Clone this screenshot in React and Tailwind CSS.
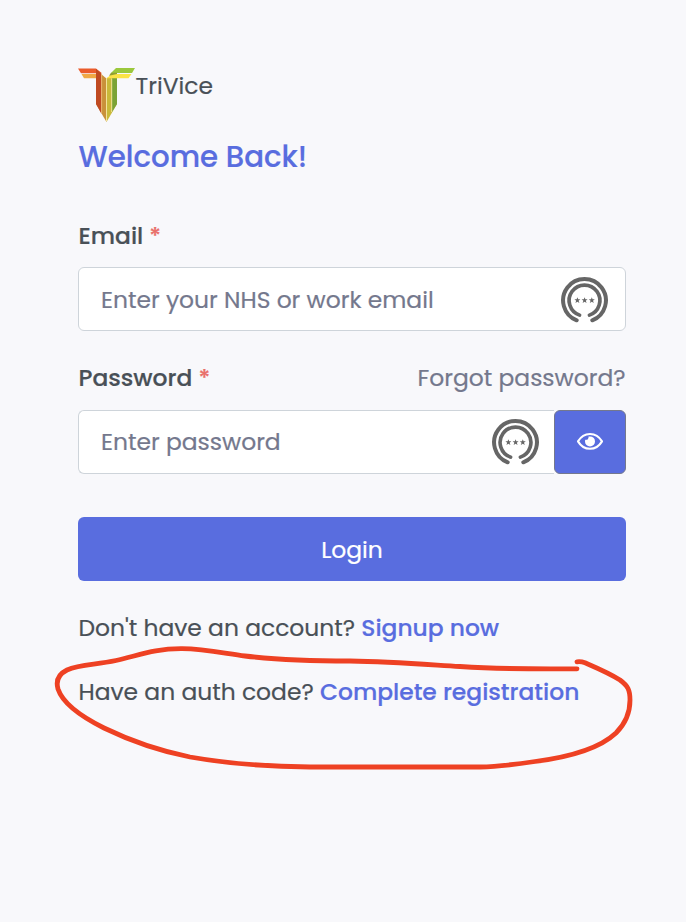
function Logo() {
  return (
    <svg className="block h-[55px] w-[57px] shrink-0" viewBox="0 0 57 55">
      <polygon points="0,0.5 18,0.5 24,5.2 3,5.2" fill="#ea5b2b" />
      <polygon points="3.5,6 19,6 19,10.3 6,10.3" fill="#f0a844" />
      <polygon points="38,0 57,0 54,5 33,5" fill="#9bc83c" />
      <polygon points="18,2 28.5,10.5 28.5,54 18,36" fill="#c9913a" />
      <polygon points="18,1 23.3,5.5 23.3,45.5 18,36" fill="#c04a22" />
      <polygon points="28.5,10.5 39,5 39,36 28.5,54" fill="#c9b93a" />
      <polygon points="34,9 39,7 39,36 34,44" fill="#7ba336" />
      <polygon points="34,6 53.5,6 50.5,10.3 28.5,10.3" fill="#fbe345" />
      <polygon points="33,4.8 39,4.8 39,6 31,7.8" fill="#8f9f32" />
      <path d="M28.5 10V53M33.7 10.5V44" stroke="#f6e7a0" strokeWidth="0.9" />
      <path d="M23.6 6V45" stroke="#eebb78" strokeWidth="0.9" />
    </svg>
  );
}

const starPoints = "0,-3.2 0.8,-1.1 3,-1.1 1.2,0.4 2,2.7 0,1.3 -2,2.7 -1.2,0.4 -3,-1.1 -0.8,-1.1";

function KeeperIcon() {
  return (
    <svg className="block size-12 shrink-0" viewBox="0 0 48 48" fill="none" stroke="#666" strokeLinecap="round">
      <path d="M16.7 44.3A21.4 21.4 0 1 1 32.3 44.3" strokeWidth="4" />
      <path d="M19.6 39.1A15.4 15.4 0 1 1 29.4 39.1" strokeWidth="3.6" />
      <g fill="#666" stroke="none">
        <polygon points={starPoints} transform="translate(17.4 24.4)" />
        <polygon points={starPoints} transform="translate(24.6 24.4)" />
        <polygon points={starPoints} transform="translate(31.8 24.4)" />
      </g>
    </svg>
  );
}

function EyeIcon() {
  return (
    <svg className="block h-[20px] w-[28px]" viewBox="0 0 28 20" fill="none">
      <path d="M2 9.4C5 4.3 9 2 14 2S23 4.3 26 9.4C23 14.5 19 16.8 14 16.8S5 14.5 2 9.4Z" stroke="white" strokeWidth="2.1" strokeLinejoin="round" />
      <path d="M14 4.4A5 5 0 1 1 9 9.4C9 8.7 9.1 8.2 9.3 7.7A2.5 2.5 0 0 0 12.5 4.6C13 4.4 13.5 4.4 14 4.4Z" fill="white" />
    </svg>
  );
}

export default function App() {
  return (
    <main className="relative h-[922px] w-[686px] overflow-hidden whitespace-nowrap bg-[#f8f8fb] pl-[78px] pr-[60px] pt-[68px] font-['Poppins','Inter',sans-serif] text-[23.4px] leading-9 text-[#495057] [-webkit-text-stroke:0.2px]">
      <header className="flex h-[54px] items-start">
        <Logo />
        <span className="pl-[0.5px]">TriVice</span>
      </header>
      <h1 className="mt-[15px] pl-[0.5px] text-[29.25px] font-medium leading-10 text-[#596ddf]">Welcome Back!</h1>

      <label className="mt-[41px] block pl-[0.5px] font-medium">
        Email <span className="text-[#e96f6a]">*</span>
      </label>
      <div className="mt-[13px] flex h-16 items-center justify-between rounded-md border border-[#ced4da] bg-white pl-[22px] pr-[17px] pt-[2px] text-[#74788d]">
        <span>Enter your NHS or work email</span>
        <KeeperIcon />
      </div>

      <div className="mt-[29px] flex justify-between">
        <label className="pl-[0.5px] font-medium">
          Password <span className="text-[#e96f6a]">*</span>
        </label>
        <a className="pr-[0.5px] text-[#74788d]">Forgot password?</a>
      </div>
      <div className="mt-[14px] flex h-16">
        <div className="flex flex-1 items-center justify-between rounded-l-md border border-r-0 border-[#ced4da] bg-white pl-[22px] pr-[15px] text-[#74788d]">
          <span>Enter password</span>
          <KeeperIcon />
        </div>
        <button className="flex w-[72px] items-center justify-center rounded-md border border-[#74788d] bg-[#596ddf]">
          <EyeIcon />
        </button>
      </div>

      <button className="mt-[43px] flex h-16 w-full items-center justify-center rounded-md bg-[#596ddf] pt-[2px] text-white">
        <span>Login</span>
      </button>

      <p className="mt-[29px] pl-[0.5px]">
        Don't have an account? <a className="font-medium text-[#596ddf]">Signup now</a>
      </p>
      <p className="mt-[28px] pl-[0.5px]">
        Have an auth code? <a className="font-medium text-[#596ddf]">Complete registration</a>
      </p>

      <svg className="pointer-events-none absolute left-0 top-0 h-[922px] w-[686px]" viewBox="0 0 686 922" fill="none" stroke="#ee4123" strokeWidth="4.8" strokeLinecap="round" strokeLinejoin="round">
        <path d="M577 668.8C540 669.2 500 669 460 666.5C420 664 390 661.5 350 661C310 661 270 659 245 656C225 653.5 205 649 182 648.7C155 648.5 140 655 116 660.5C95 665 80 664 67 670C57 675 56 682 58 689C63 704 82 717 104 728C135 743 165 752 190 757C230 764 265 766.5 310 767L480 767C500 766.5 515 764.5 535 761.5C570 757 600 748 616 733C627 722 630 711 630 700C630 690 628 686 620 680C609 673 597 668 585 662.8C581 661.3 579 661.5 577 661.8" />
      </svg>
    </main>
  );
}
